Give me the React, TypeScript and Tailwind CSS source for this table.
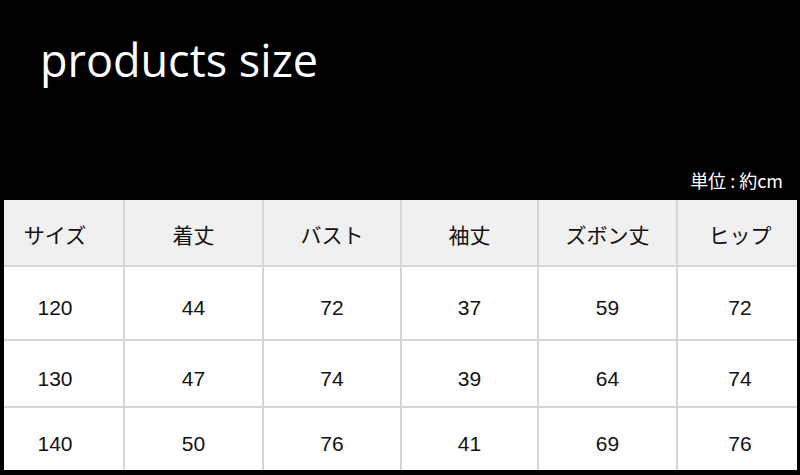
const headers = ["サイズ", "着丈", "バスト", "袖丈", "ズボン丈", "ヒップ"];

const rows = [
  ["120", "44", "72", "37", "59", "72"],
  ["130", "47", "74", "39", "64", "74"],
  ["140", "50", "76", "41", "69", "76"],
];

// first and last column text sits a bit off-centre in the source
const cellPad = ["pr-[17px]", "", "", "", "", "pl-[5px]"];

export default function App() {
  return (
    <div className="h-[475px] w-[800px] overflow-hidden bg-black">
      <div className="flex h-[168px] flex-col">
        <h1 className="pl-[40px] pt-[32px] font-['Open_Sans','Noto_Sans',sans-serif] text-[45px] leading-[56px] text-white">
          products size
        </h1>
      </div>
      <div className="flex h-[32px] items-start justify-end pr-[17px] font-['Noto_Sans_CJK_JP',sans-serif] text-[18px] leading-[24px] text-white">
        <span>単位</span>
        <span className="px-[4px]">:</span>
        <span>約cm</span>
      </div>
      <div className="ml-[4px] grid w-[793px] grid-cols-[119px_137px_136px_135px_137px_119px] grid-rows-[65px_72px_65px_62px] gap-[2px] bg-[#d6d6d6] font-['Liberation_Sans','Noto_Sans_CJK_JP',sans-serif] text-[#111]">
        {headers.map((h, i) => (
          <div
            key={h}
            className={`flex items-center justify-center bg-[#f0f0f0] pt-[4px] font-['Noto_Sans_CJK_JP',sans-serif] text-[21px] ${cellPad[i]}`}
          >
            {h}
          </div>
        ))}
        {rows.map((r, ri) =>
          r.map((v, ci) => (
            <div
              key={`${ri}-${ci}`}
              className={`flex items-center justify-center bg-white pt-[10px] text-[21px] ${cellPad[ci]}`}
            >
              {v}
            </div>
          ))
        )}
      </div>
    </div>
  );
}
